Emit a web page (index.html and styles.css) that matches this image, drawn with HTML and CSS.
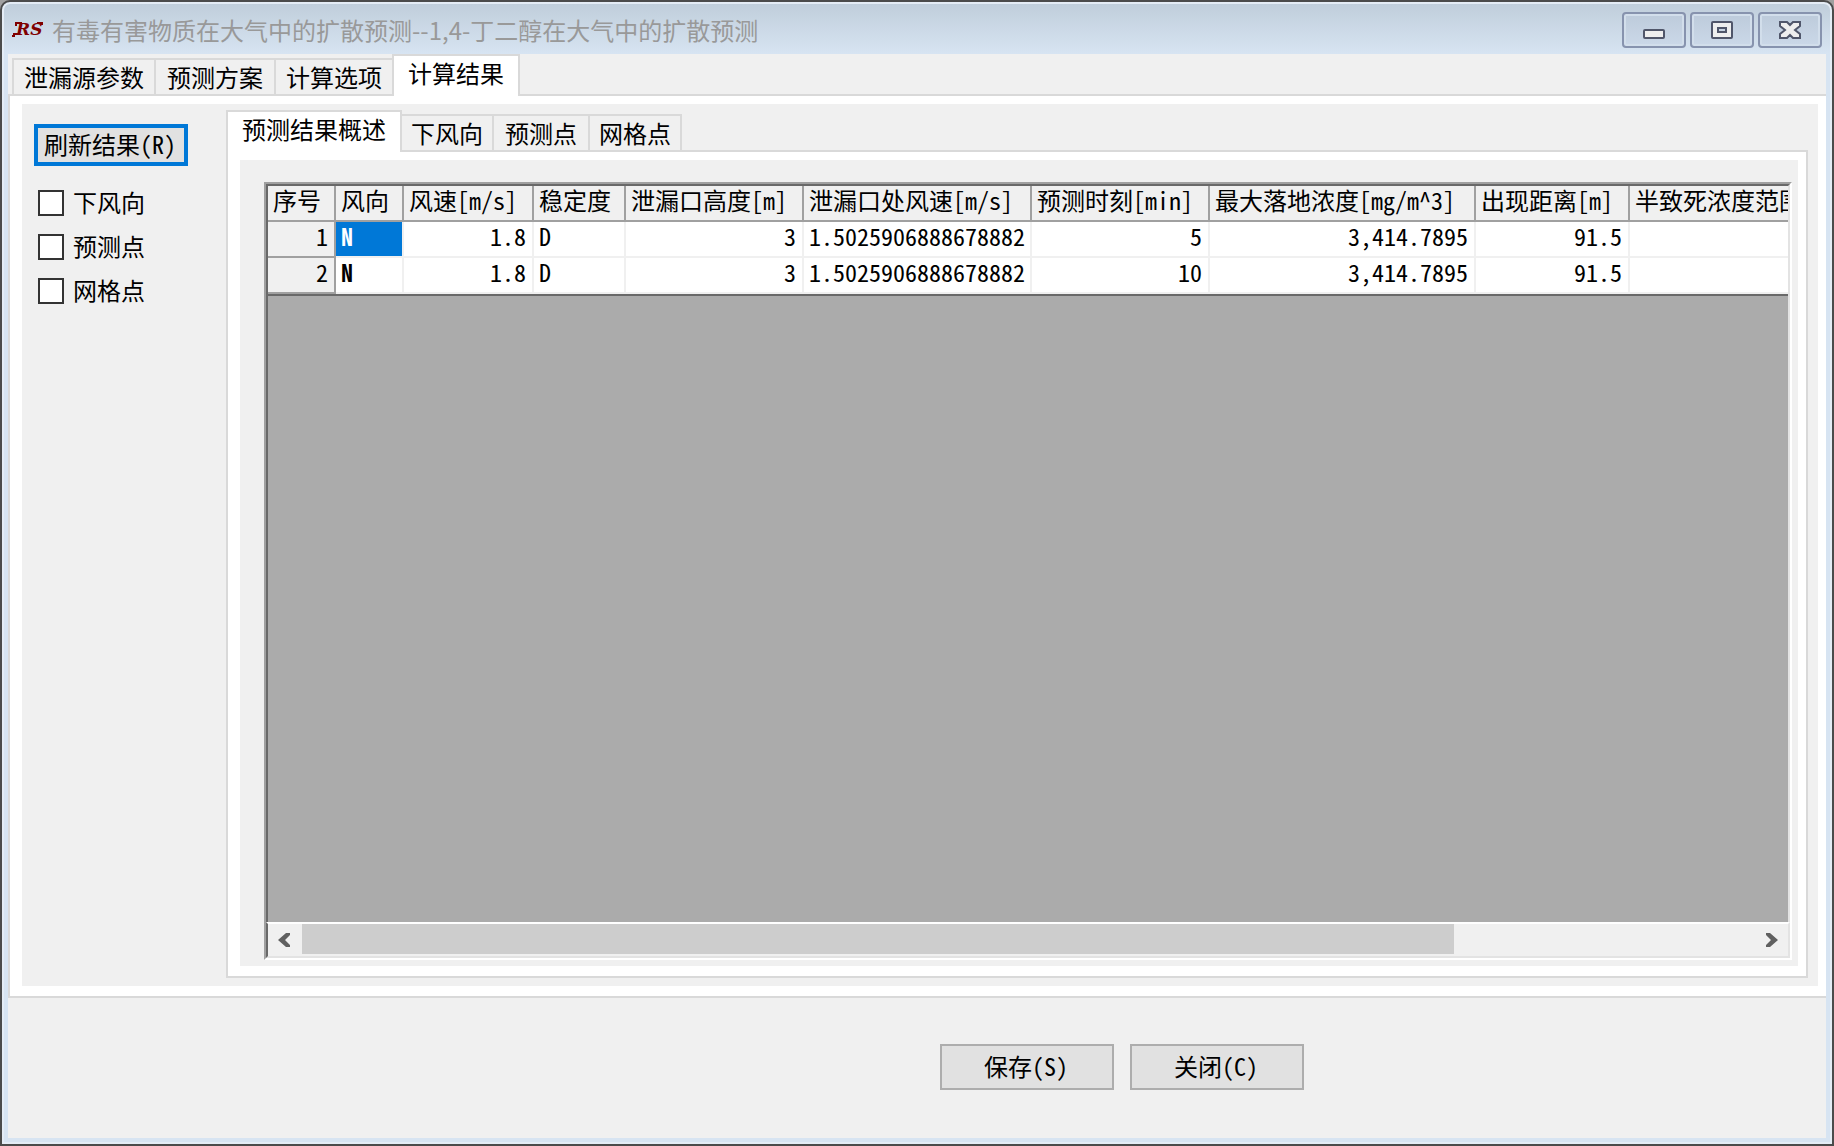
FILE: index.html
```html
<!DOCTYPE html>
<html lang="zh-CN">
	<head>
		<meta charset="UTF-8">
		<title>有毒有害物质在大气中的扩散预测</title>
		<link rel="stylesheet" href="styles.css">
	</head>
	<body>
		<div class="window">
			<div class="title">
				<svg class="logo" width="32" height="24" viewBox="0 0 32 24">
					<text x="4" y="17">RS</text>
					<path d="M0 18h2v-2h4M4 8V5h6M25 5h5v2"/>
				</svg>
				<h1>有毒有害物质在大气中的扩散预测--1,4-丁二醇在大气中的扩散预测</h1>
				<div class="ctrl">
					<button type="button" aria-label="最小化">
						<svg width="24" height="20" viewBox="0 0 24 20"><rect x="2" y="10" width="20" height="8" rx="1"/></svg>
					</button>
					<button type="button" aria-label="最大化">
						<svg width="24" height="20" viewBox="0 0 24 20"><rect x="2" y="2" width="20" height="16" rx="1"/><rect class="hole" x="8" y="8" width="8" height="4"/></svg>
					</button>
					<button type="button" aria-label="关闭窗口">
						<svg width="24" height="20" viewBox="0 0 24 20"><path d="M2 2h7l3 3 3-3h7v4l-5 4 5 4v4h-7l-3-3-3 3H2v-4l5-4-5-4z"/></svg>
					</button>
				</div>
			</div>

			<div class="content">
				<div class="tabs main-tabs" role="tablist">
					<button type="button" role="tab">泄漏源参数</button>
					<button type="button" role="tab">预测方案</button>
					<button type="button" role="tab">计算选项</button>
					<button type="button" role="tab" class="on" aria-selected="true">计算结果</button>
				</div>
				<div class="panel main-panel">
					<div class="page result">
						<div class="side">
							<button type="button" class="btn refresh">刷新结果(R)</button>
							<label><input type="checkbox">下风向</label>
							<label><input type="checkbox">预测点</label>
							<label><input type="checkbox">网格点</label>
						</div>
						<div class="detail">
							<div class="tabs sub-tabs" role="tablist">
								<button type="button" role="tab" class="on" aria-selected="true">预测结果概述</button>
								<button type="button" role="tab">下风向</button>
								<button type="button" role="tab">预测点</button>
								<button type="button" role="tab">网格点</button>
							</div>
							<div class="panel">
								<div class="page summary">
									<div class="grid">
										<div class="rows">
											<table>
												<colgroup>
													<col class="c-no"><col class="c-dir"><col class="c-speed"><col class="c-stab"><col class="c-height">
													<col class="c-wind"><col class="c-time"><col class="c-max"><col class="c-dist"><col class="c-half">
												</colgroup>
												<thead>
													<tr>
														<th>序号</th>
														<th>风向</th>
														<th>风速[m/s]</th>
														<th>稳定度</th>
														<th>泄漏口高度[m]</th>
														<th>泄漏口处风速[m/s]</th>
														<th>预测时刻[min]</th>
														<th>最大落地浓度[mg/m^3]</th>
														<th>出现距离[m]</th>
														<th>半致死浓度范围[m]</th>
													</tr>
												</thead>
												<tbody>
													<tr>
														<th class="num">1</th>
														<td class="dir sel">N</td>
														<td class="num">1.8</td>
														<td>D</td>
														<td class="num">3</td>
														<td>1.5025906888678882</td>
														<td class="num">5</td>
														<td class="num">3,414.7895</td>
														<td class="num">91.5</td>
														<td></td>
													</tr>
													<tr>
														<th class="num">2</th>
														<td class="dir">N</td>
														<td class="num">1.8</td>
														<td>D</td>
														<td class="num">3</td>
														<td>1.5025906888678882</td>
														<td class="num">10</td>
														<td class="num">3,414.7895</td>
														<td class="num">91.5</td>
														<td></td>
													</tr>
												</tbody>
											</table>
										</div>
										<div class="scroll">
											<button type="button" aria-label="向左滚动">
												<svg width="14" height="16" viewBox="0 0 14 16"><path d="M12 1H8L0 8l8 7h4v-2L7 8l5-5z"/></svg>
											</button>
											<div class="track"><div class="thumb"></div></div>
											<button type="button" aria-label="向右滚动">
												<svg width="14" height="16" viewBox="0 0 14 16"><path d="M2 1h4l8 7-8 7H2v-2l5-5-5-5z"/></svg>
											</button>
										</div>
									</div>
								</div>
							</div>
						</div>
					</div>
				</div>
				<div class="bottom">
					<button type="button" class="btn">保存(S)</button>
					<button type="button" class="btn">关闭(C)</button>
				</div>
			</div>
		</div>
	</body>
</html>
```
FILE: styles.css
```css
*{
	box-sizing: border-box;
}
body{
	margin: 0;
	background-color: #a0a0a0;
	color: #000;
	font: 24px/24px "Noto Sans CJK SC", sans-serif;
}
button{
	padding: 0;
	font: inherit;
	color: inherit;
}

/* 窗口 */
.window{
	display: flex;
	flex-direction: column;
	min-height: 100vh;
	padding: 0 6px 6px;
	border: 2px solid #4b4b4b;
	border-radius: 10px 10px 0 0;
	background: linear-gradient(#bfcdda, #d7e4f2 52px);
	box-shadow: inset 0 0 0 2px #e4ecf5;
}
.title{
	display: flex;
	align-items: center;
	height: 52px;
	padding: 4px 4px 0;
}
.title h1{
	flex: 1;
	margin: 0 0 0 8px;
	font-size: 24px;
	font-weight: normal;
	color: #999;
}
.logo{
	overflow: visible;
}
.logo text{
	font: italic bold 17px "DejaVu Serif", serif;
	fill: #800000;
}
.logo path{
	fill: none;
	stroke: #800000;
	stroke-width: 2;
}
.ctrl{
	display: flex;
	gap: 4px;
}
.ctrl button{
	display: flex;
	align-items: center;
	justify-content: center;
	width: 64px;
	height: 36px;
	border: 2px solid #8793ae;
	border-radius: 4px;
	background: linear-gradient(#bdcbdb, #cbd8e8);
	box-shadow: inset 0 0 0 2px #d2deeb;
}
.ctrl svg{
	fill: #eee;
	stroke: #50566a;
	stroke-width: 2;
}
.ctrl .hole{
	fill: #c5d2e1;
}
.content{
	flex: 1;
	display: flex;
	flex-direction: column;
	background-color: #f0f0f0;
}

/* 选项卡 */
.tabs{
	display: grid;
	align-items: end;
	height: 40px;
}
.main-tabs{
	grid-template-columns: 142px 120px 118px 126px;
	padding-left: 4px;
}
.sub-tabs{
	grid-template-columns: 174px 92px 96px 92px;
}
.tabs button{
	height: 36px;
	margin-right: -2px;
	border: 2px solid #d9d9d9;
	border-bottom: 0;
	background-color: #f0f0f0;
	white-space: nowrap;
}
.tabs .on{
	position: relative;
	height: 42px;
	margin-bottom: -2px;
	padding-bottom: 6px;
	background-color: #fff;
}
.panel{
	flex: 1;
	display: flex;
	padding: 8px 8px 10px 12px;
	border: 2px solid #d9d9d9;
	background-color: #fff;
}
.main-panel{
	border-right: 0;
}
.page{
	flex: 1;
	display: flex;
	min-width: 0;
	background-color: #f0f0f0;
}
.result{
	padding: 6px 10px 8px 0;
}
.summary{
	padding: 22px 6px 6px 24px;
}

/* 左侧 */
.side{
	display: flex;
	flex-direction: column;
	align-items: flex-start;
	gap: 18px;
	width: 204px;
	padding: 14px 12px;
}
.side label{
	display: flex;
	height: 26px;
	margin-left: 4px;
}
.side input{
	appearance: none;
	width: 26px;
	height: 26px;
	margin: 0 9px 0 0;
	border: 2px solid #333;
	background-color: #fff;
}
.btn{
	width: 174px;
	height: 46px;
	padding: 0 2px 2px 0;
	border: 2px solid #adadad;
	background-color: #e1e1e1;
	font-feature-settings: "hwid";
}
.refresh{
	width: 154px;
	height: 42px;
	margin-bottom: 6px;
	border: 4px solid #0078d7;
}
.detail{
	flex: 1;
	display: flex;
	flex-direction: column;
	min-width: 0;
}

/* 结果表格 */
.grid{
	flex: 1;
	display: flex;
	flex-direction: column;
	min-width: 0;
	border: 2px solid;
	border-color: #a0a0a0 #fff #fff #a0a0a0;
	background-color: #ababab;
}
.rows{
	flex: 1;
	overflow: hidden;
	border: solid;
	border-width: 2px 2px 0;
	border-color: #696969 #e3e3e3 #696969 #696969;
}
table{
	width: 1622px;
	table-layout: fixed;
	border-collapse: separate;
	border-spacing: 0;
	border-bottom: 2px solid #696969;
	font-feature-settings: "hwid";
}
.c-no, .c-dir{
	width: 68px;
}
.c-speed{
	width: 130px;
}
.c-stab{
	width: 92px;
}
.c-height, .c-time{
	width: 178px;
}
.c-wind{
	width: 228px;
}
.c-max{
	width: 266px;
}
.c-dist{
	width: 154px;
}
.c-half{
	width: 260px;
}
th, td{
	height: 36px;
	padding: 0 6px 6px 5px;
	border-right: 2px solid #f0f0f0;
	border-bottom: 2px solid #f0f0f0;
	background-color: #fff;
	font-weight: normal;
	text-align: left;
	white-space: nowrap;
}
th{
	border-color: #a0a0a0;
	background-color: #f0f0f0;
}
.num{
	text-align: right;
}
.dir{
	font-weight: bold;
}
.sel{
	background-color: #0078d7;
	color: #fff;
}
.scroll{
	display: flex;
	height: 36px;
	border: 2px solid #e3e3e3;
	border-top-color: #fff;
	border-left-color: #696969;
	background-color: #f0f0f0;
}
.scroll button{
	width: 34px;
	border: 0;
	background: none;
}
.scroll svg{
	display: block;
	margin: 0 auto;
	fill: #606060;
}
.track{
	flex: 1;
}
.thumb{
	width: calc(80% - 10px);
	height: 30px;
	background-color: #cdcdcd;
}

/* 底部按钮 */
.bottom{
	display: flex;
	gap: 16px;
	height: 140px;
	padding: 46px 0 0 calc(50% + 23px);
}
```
